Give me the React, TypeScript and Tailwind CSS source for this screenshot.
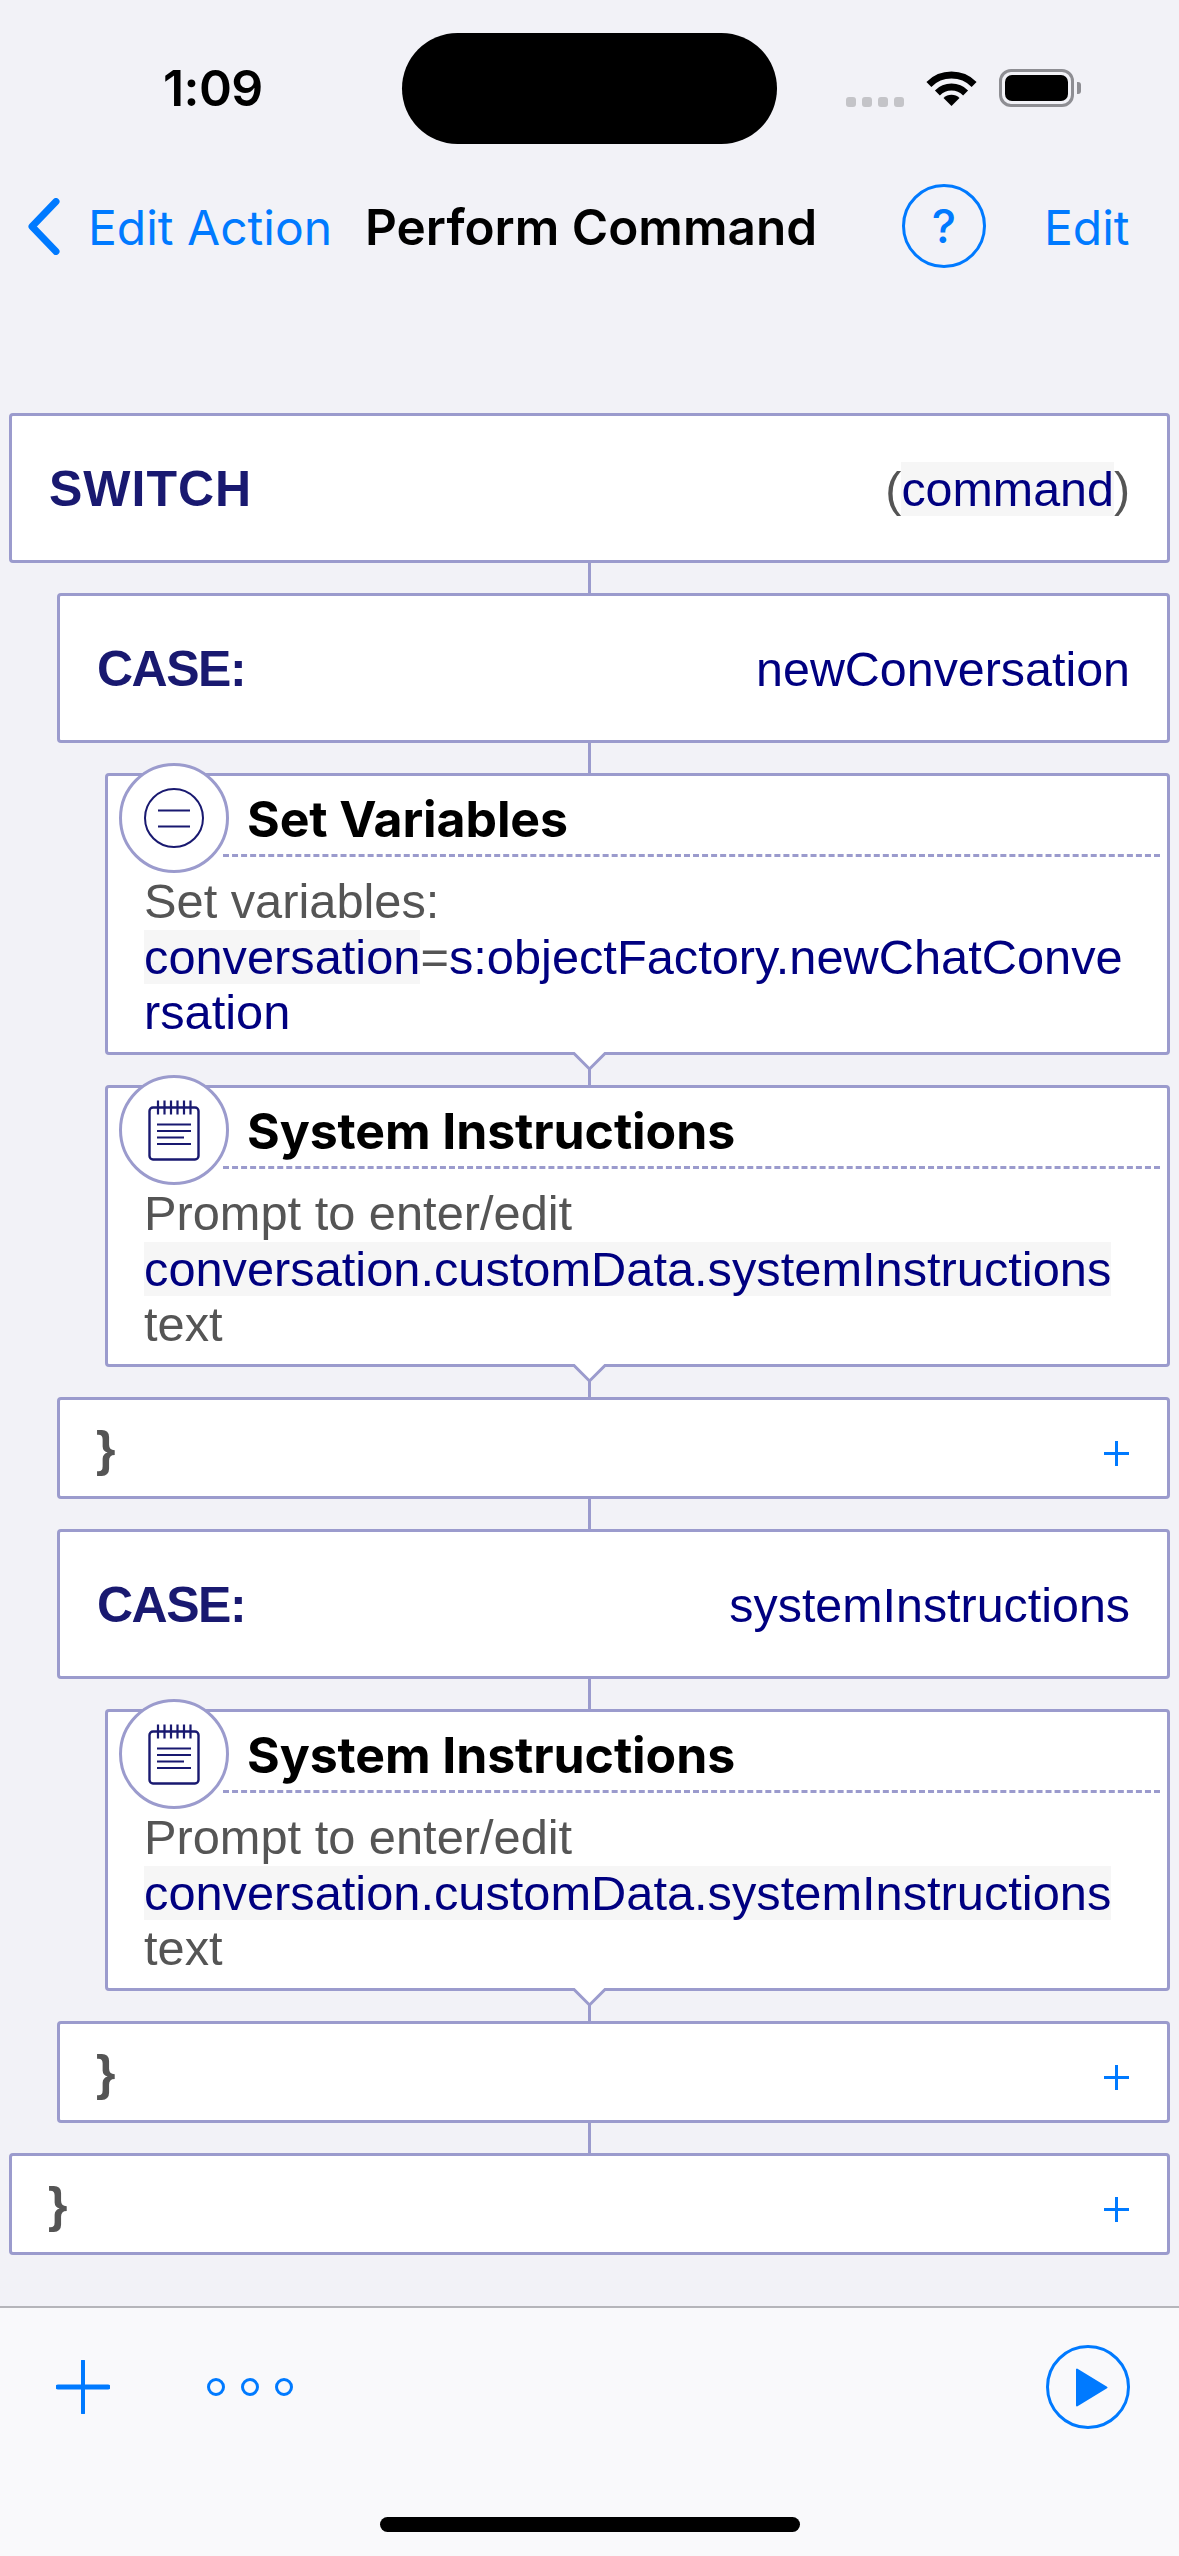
const sfFont = "font-['Inter',sans-serif]";
const webFont = "font-['Liberation_Sans',Arial,sans-serif]";

function Wifi() {
  return (
    <svg width="51" height="37" viewBox="0 0 51 37" className="mt-[-1px]">
      <path d="M2.9 15.4A32 32 0 0 1 48.1 15.4" fill="none" stroke="#000" strokeWidth="7" />
      <path d="M11.4 23.9A20 20 0 0 1 39.6 23.9" fill="none" stroke="#000" strokeWidth="7" />
      <path d="M25.5 37L17.5 29A11.3 11.3 0 0 1 33.5 29Z" fill="#000" />
    </svg>
  );
}

function Battery() {
  return (
    <div className="flex items-center gap-[3px]">
      <div className="flex h-[38px] w-[75px] items-center justify-center rounded-[12px] border-[3px] border-[#8e8e93] bg-transparent">
        <div className="h-[26px] w-[63px] rounded-[7px] bg-black" />
      </div>
      <div className="h-[12px] w-[4px] rounded-r-[3px] bg-[#8e8e93]" />
    </div>
  );
}

function StatusBar() {
  return (
    <div className="flex h-[144px] items-center pt-[33px]">
      <div className={`${sfFont} ml-[163px] w-[239px] pb-[2px] text-[50px] font-semibold leading-none tracking-[-0.6px] text-black`}>1:09</div>
      <div className="h-[111px] w-[375px] rounded-full bg-black" />
      <div className="ml-[69px] flex items-start gap-[6px] translate-y-[13px]">
        {[0, 1, 2, 3].map((d) => (
          <div key={d} className="h-[10px] w-[10px] rounded-[3px] bg-[#c4c4c8]" />
        ))}
      </div>
      <div className="ml-[22px] translate-y-[-1px]">
        <Wifi />
      </div>
      <div className="ml-[22px] translate-y-[-1px]">
        <Battery />
      </div>
    </div>
  );
}

function NavBar() {
  return (
    <div className={`${sfFont} flex h-[164px] items-center text-[48px] leading-none text-[#007aff]`}>
      <svg width="32" height="57" viewBox="0 0 32 57" className="ml-[28px]">
        <path d="M28 3.5L4 28.5L28 53.5" fill="none" stroke="#007aff" strokeWidth="7" strokeLinecap="round" strokeLinejoin="round" />
      </svg>
      <span className="ml-[28px] w-[277px] pt-[3px]">Edit Action</span>
      <span className="w-[537px] pt-[3px] text-[49.5px] font-semibold text-black">Perform Command</span>
      <div className="flex h-[84px] w-[84px] shrink-0 items-center justify-center rounded-full border-[3px] border-[#007aff] text-[46px] font-medium">?</div>
      <span className="ml-[58px] pt-[3px]">Edit</span>
    </div>
  );
}

function Connector({ notch }: { notch?: boolean }) {
  return (
    <div className="relative flex h-[30px] justify-center">
      <div className="h-full w-[3px] bg-[#9b9bcd]" />
      {notch && (
        <svg width="39" height="22" viewBox="0 0 39 22" className="absolute left-[570px] top-[-5px]">
          <path d="M3 1.5H36L19.5 19Z" fill="#fff" />
          <path d="M0 3.5H4L19.5 19L35 3.5H39" fill="none" stroke="#9b9bcd" strokeWidth="3" />
        </svg>
      )}
    </div>
  );
}

function Code({ children }: { children: React.ReactNode }) {
  return <span className="bg-[#f6f6f6] text-[#000080]">{children}</span>;
}

function HeaderBox({ label, indent, labelClass, children }: { label: string; indent: string; labelClass: string; children: React.ReactNode }) {
  return (
    <div className={`${indent} ${webFont} mr-[9px] flex h-[150px] items-center justify-between rounded-[4px] border-[3px] border-[#9b9bcd] bg-white pl-[37px] pr-[37px] pt-[2px] text-[48.4px]`}>
      <span className={`${labelClass} text-[50px] font-bold text-[#191970]`}>{label}</span>
      <span className="text-[#000080]">{children}</span>
    </div>
  );
}

function CloseBox({ indent }: { indent: string }) {
  return (
    <div className={`${indent} ${webFont} mr-[9px] flex h-[102px] items-center justify-between rounded-[4px] border-[3px] border-[#9b9bcd] bg-white pl-[36px] pr-[38px]`}>
      <span className="pt-[2px] text-[50px] font-bold leading-none text-[#555]">{"}"}</span>
      <svg width="25" height="25" viewBox="0 0 25 25" className="mt-[10px]">
        <path d="M12.5 0V25M0 12.5H25" stroke="#007aff" strokeWidth="3" />
      </svg>
    </div>
  );
}

function IconBadge({ children }: { children: React.ReactNode }) {
  return (
    <div className="absolute left-[11px] top-[-13px] flex h-[110px] w-[110px] items-center justify-center rounded-full border-[3px] border-[#9b9bcd] bg-white">
      {children}
    </div>
  );
}

function EqualsIcon() {
  return (
    <svg width="60" height="60" viewBox="0 0 60 60">
      <circle cx="30" cy="30" r="29" fill="none" stroke="#191970" strokeWidth="2" />
      <path d="M14 22.5H46M14 38.5H46" stroke="#191970" strokeWidth="2" />
    </svg>
  );
}

function NotepadIcon() {
  return (
    <svg width="54" height="62" viewBox="0 0 54 62">
      <rect x="2.5" y="8.5" width="49" height="52" rx="3.5" fill="none" stroke="#191970" strokeWidth="2.4" />
      <path d="M11 1.5V15.5M17.5 1.5V15.5M24 1.5V15.5M30.5 1.5V15.5M37 1.5V15.5M43.5 1.5V15.5" stroke="#191970" strokeWidth="2.2" />
      <path d="M10 25.5H44M10 32H44M10 38.5H37M10 45H44" stroke="#191970" strokeWidth="2.2" />
    </svg>
  );
}

function TaskBox({ title, icon, children }: { title: string; icon: React.ReactNode; children: React.ReactNode }) {
  return (
    <div className="relative ml-[105px] mr-[9px] h-[282px] rounded-[4px] border-[3px] border-[#9b9bcd] bg-white">
      <IconBadge>{icon}</IconBadge>
      <div className={`${sfFont} ml-[115px] mr-[7px] h-[81px] border-b-[3px] border-dashed border-[#9b9bcd]`}>
        <div className="pl-[24px] pt-[18px] text-[50px] font-bold leading-none tracking-[-0.1px] text-black">{title}</div>
      </div>
      <div className={`${webFont} w-[1018px] break-all pl-[36px] pt-[17px] text-[48.75px] leading-[55.5px] text-[#555]`}>{children}</div>
    </div>
  );
}

function SystemInstructions() {
  return (
    <TaskBox title="System Instructions" icon={<NotepadIcon />}>
      Prompt to enter/edit
      <br />
      <Code>conversation.customData.systemInstructions</Code>
      <br />
      text
    </TaskBox>
  );
}

function Toolbar() {
  return (
    <div className="flex h-[250px] shrink-0 flex-col border-t-[2px] border-[#b5b5ba] bg-[#f9f9fb]">
      <div className="flex items-center pt-[37px]">
        <svg width="54" height="54" viewBox="0 0 54 54" className="ml-[56px]">
          <path d="M27 1V53" stroke="#007aff" strokeWidth="4" strokeLinecap="round" />
          <path d="M2 27H52" stroke="#007aff" strokeWidth="5" strokeLinecap="round" />
        </svg>
        <div className="ml-[97px] flex gap-[16px]">
          {[0, 1, 2].map((d) => (
            <div key={d} className="h-[18px] w-[18px] rounded-full border-[3px] border-[#007aff]" />
          ))}
        </div>
        <svg width="84" height="84" viewBox="0 0 84 84" className="ml-auto mr-[49px]">
          <circle cx="42" cy="42" r="40.5" fill="none" stroke="#007aff" strokeWidth="3" />
          <path d="M31 24.5V60.5L60.5 42.5Z" fill="#007aff" stroke="#007aff" strokeWidth="2" strokeLinejoin="round" />
        </svg>
      </div>
      <div className="mx-auto mt-[88px] h-[15px] w-[420px] rounded-full bg-black" />
    </div>
  );
}

export default function App() {
  return (
    <div className="flex h-[2556px] w-[1179px] flex-col overflow-hidden bg-[#f2f2f7]">
      <StatusBar />
      <NavBar />
      <div className="mt-[105px] flex-1">
        <HeaderBox label="SWITCH" indent="ml-[9px]" labelClass="tracking-[1px]">
          <span className="text-[#555]">(</span>
          <Code>command</Code>
          <span className="text-[#555]">)</span>
        </HeaderBox>
        <Connector />
        <HeaderBox label="CASE:" indent="ml-[57px]" labelClass="tracking-[-1.5px]">newConversation</HeaderBox>
        <Connector />
        <TaskBox title="Set Variables" icon={<EqualsIcon />}>
          Set variables:
          <br />
          <Code>conversation</Code>=<span className="text-[#000080]">s:objectFactory.newChatConversation</span>
        </TaskBox>
        <Connector notch />
        <SystemInstructions />
        <Connector notch />
        <CloseBox indent="ml-[57px]" />
        <Connector />
        <HeaderBox label="CASE:" indent="ml-[57px]" labelClass="tracking-[-1.5px]">systemInstructions</HeaderBox>
        <Connector />
        <SystemInstructions />
        <Connector notch />
        <CloseBox indent="ml-[57px]" />
        <Connector />
        <CloseBox indent="ml-[9px]" />
      </div>
      <Toolbar />
    </div>
  );
}
